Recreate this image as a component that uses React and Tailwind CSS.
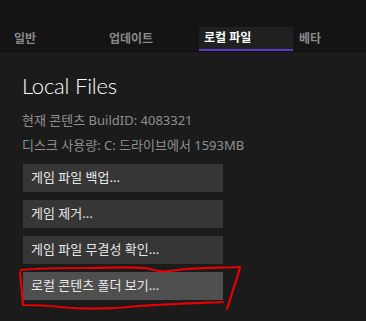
import React from "react";

const tabs = ["일반", "업데이트", "로컬 파일", "베타"];
const actions = [
  "게임 파일 백업...",
  "게임 제거...",
  "게임 파일 무결성 확인...",
  "로컬 콘텐츠 폴더 보기...",
];

const font = { fontFamily: '"Noto Sans", "Noto Sans CJK KR", sans-serif' };

const App = () => {
  return (
    <div className="relative w-[366px] h-[321px] bg-[#1b1b1b] overflow-hidden" style={font}>
      {/* tab header */}
      <div className="h-[52px] bg-[#141414] border-b border-[#0e0e0e] flex items-end pl-[9px]">
        {tabs.map((tab, i) => (
          <div
            key={tab}
            className={
              i === 2
                ? "shrink-0 w-[94px] h-[24px] pl-[5px] flex items-center text-[12px] font-bold text-white bg-[#202020] border-b-2 border-[#5b3bc4] mr-px"
                : "shrink-0 w-[94px] h-[24px] pl-[5px] flex items-center text-[12px] font-bold text-[#8a8a8a] mr-px"
            }
          >
            {tab}
          </div>
        ))}
      </div>

      <div className="pl-[22px] pt-[19px]">
        <h1 className="text-[22px] font-light text-white leading-[30px] tracking-[-0.2px] font-['Lato',sans-serif]">
          Local Files
        </h1>
        <p className="mt-[10px] text-[13px] text-[#8f8f8f] leading-[18px]">
          현재 콘텐츠 BuildID: 4083321
        </p>
        <p className="mt-[7px] text-[13px] text-[#8f8f8f] leading-[18px]">
          디스크 사용량: C: 드라이브에서 1593MB
        </p>

        <div className="mt-[10px] flex flex-col gap-2 pl-px">
          {actions.map((label, i) => (
            <div
              key={label}
              className={
                i === 3
                  ? "w-[200px] h-[28px] pl-[8px] flex items-center text-[13px] text-[#e8e8e8] bg-[#4f4f4f]"
                  : "w-[200px] h-[28px] pl-[8px] flex items-center text-[13px] text-[#e8e8e8] bg-[#363636]"
              }
            >
              {label}
            </div>
          ))}
        </div>
      </div>

      {/* red marker scribble around the last button */}
      <svg
        className="absolute left-0 top-0 pointer-events-none"
        width="366"
        height="321"
        viewBox="0 0 366 321"
      >
        <path
          d="M21 270 C40 268 60 268 85 268 S140 266 150 269 S165 272 178 270 S215 268 240 267 C238 275 236 282 233 290 C231 297 229 303 227 309"
          fill="none"
          stroke="#e60000"
          strokeWidth="2.2"
          strokeLinecap="round"
          strokeLinejoin="round"
        />
        <path
          d="M223 302 C200 303 170 304 140 306 C110 309 80 309 60 307 C45 305 30 305 23 305 C22 293 21 282 20 272"
          fill="none"
          stroke="#e60000"
          strokeWidth="2.2"
          strokeLinecap="round"
          strokeLinejoin="round"
        />
      </svg>
    </div>
  );
};

export default App;
